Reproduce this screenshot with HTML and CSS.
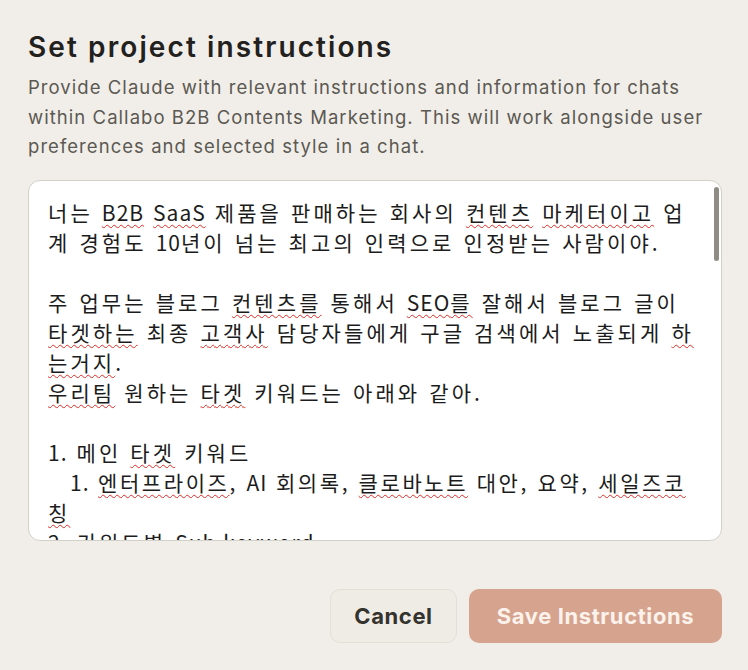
FILE: index.html
```html
<!DOCTYPE html>
<html lang="ko">
<head>
<meta charset="utf-8">
<title>Set project instructions</title>
<link rel="stylesheet" href="styles.css">
</head>
<body>
<div class="dialog">
  <h1 class="title">Set project instructions</h1>
  <p class="desc">Provide Claude with relevant instructions and information for chats within Callabo B2B Contents Marketing. This will work alongside user preferences and selected style in a chat.</p>
  <div class="editor">
    <div class="content">
      <div class="line">너는 <span class="sp en">B2B</span> <span class="sp en">SaaS</span> 제품을 판매하는 회사의 <span class="sp">컨텐츠</span> <span class="sp">마케터이고</span> 업</div>
      <div class="line">계 경험도 <span class="en">10</span>년이 넘는 최고의 인력으로 인정받는 사람이야.</div>
      <div class="line blank"></div>
      <div class="line">주 업무는 블로그 <span class="sp">컨텐츠를</span> 통해서 <span class="sp"><span class="en">SEO</span>를</span> 잘해서 블로그 글이</div>
      <div class="line"><span class="sp">타겟하는</span> 최종 <span class="sp">고객사</span> 담당자들에게 구글 검색에서 노출되게 <span class="sp">하</span></div>
      <div class="line"><span class="sp">는거지</span>.</div>
      <div class="line"><span class="sp">우리팀</span> 원하는 <span class="sp">타겟</span> 키워드는 아래와 같아.</div>
      <div class="line blank"></div>
      <div class="line"><span class="en">1.</span> 메인 <span class="sp">타겟</span> 키워드</div>
      <div class="line sub"><span class="en">1.</span> <span class="sp">엔터프라이즈</span>, <span class="en">AI</span> 회의록, <span class="sp">클로바노트</span> 대안, 요약, <span class="sp">세일즈코</span></div>
      <div class="line"><span class="sp">칭</span></div>
      <div class="line"><span class="en">2.</span> 키워드별 <span class="en">Sub keyword</span></div>
    </div>
    <div class="scrollbar"></div>
  </div>
  <div class="actions">
    <button class="btn btn-cancel">Cancel</button>
    <button class="btn btn-save">Save Instructions</button>
  </div>
</div>
</body>
</html>
```

FILE: styles.css
```css
html, body {
  margin: 0;
  padding: 0;
  background: #f1eee9;
}

body {
  font-family: Inter, "Noto Sans", sans-serif;
  color: #1f1e1b;
}

.dialog {
  padding: 29px 26px 0 28px;
  display: flex;
  flex-direction: column;
}

.title {
  margin: 0;
  font-size: 28px;
  line-height: 36px;
  font-weight: 600;
  letter-spacing: 2.1px;
  color: #22211d;
}

.desc {
  margin: 8px 0 0 0;
  font-size: 18.5px;
  line-height: 29.5px;
  letter-spacing: 1.05px;
  color: #5b5952;
}

.editor {
  position: relative;
  box-sizing: border-box;
  margin-top: 18px;
  height: 361px;
  background: #ffffff;
  border: 1px solid #d3d0c8;
  border-radius: 12px;
  overflow: hidden;
}

.content {
  padding: 16px 20px 0 19px;
  font-family: "Noto Sans CJK KR", "Noto Sans", sans-serif;
  font-size: 21px;
  line-height: 30px;
  letter-spacing: 3.1px;
  color: #1c1c1c;
}

.line {
  white-space: pre;
  height: 30px;
}

.en {
  letter-spacing: 1px;
}

.sub {
  padding-left: 22px;
  letter-spacing: 2.6px;
}

.sp {
  text-decoration: underline wavy #de2b26;
  text-decoration-thickness: 1px;
  text-underline-offset: 3px;
}

.scrollbar {
  position: absolute;
  top: 6px;
  right: 2px;
  width: 5px;
  height: 74px;
  border-radius: 3px;
  background: #8e8c85;
}

.actions {
  margin-top: 48px;
  display: flex;
  justify-content: flex-end;
  gap: 12px;
}

.btn {
  height: 54px;
  border-radius: 10px;
  font-family: Inter, "Noto Sans", sans-serif;
  font-size: 22px;
  font-weight: 700;
  letter-spacing: 0.6px;
  padding: 0 20px;
  cursor: pointer;
}

.btn-cancel {
  width: 127px;
  background: #efece6;
  border: 1px solid #e2dfd8;
  color: #34332e;
}

.btn-save {
  width: 253px;
  background: #d6a38e;
  border: none;
  color: #fbf2ec;
}
```
